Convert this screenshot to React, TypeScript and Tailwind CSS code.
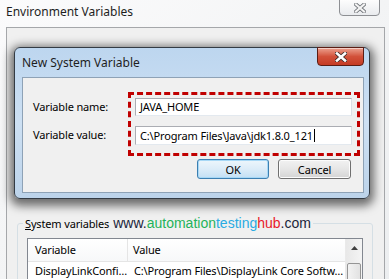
import React from 'react';

// Small window-chrome X used by both close buttons
const CloseGlyph: React.FC<{ outline: string; fill: string; w?: number }> = ({ outline, fill, w = 3 }) => (
  <svg width="12" height="10" viewBox="0 0 12 10">
    <path d="M2 1.5 L10 8.5 M10 1.5 L2 8.5" stroke={outline} strokeWidth={w + 1.6} strokeLinecap="square" />
    <path d="M2 1.5 L10 8.5 M10 1.5 L2 8.5" stroke={fill} strokeWidth={w} strokeLinecap="square" />
  </svg>
);

const Field: React.FC<{ value: string; caret?: boolean; h: string }> = ({ value, caret, h }) => (
  <div
    className={`w-[217px] ${h} bg-white border border-[#abadb3] border-b-[#e3e9ef] border-r-[#dbdfe6] flex items-center pl-[4px]`}
  >
    <span className="leading-[14px]">{value}</span>
    {caret && <span className="w-px h-[13px] bg-black ml-px" />}
  </div>
);

export default function App() {
  return (
    <div className="w-[389px] h-[279px] overflow-hidden bg-gradient-to-br from-[#fbfbfc] via-[#f3f4f5] to-[#eceef0] text-[11px] tracking-[-0.15px] text-black font-['Noto_Sans',sans-serif]">
      {/* Environment Variables title bar */}
      <div className="h-[27px] flex items-start justify-between">
        <span className="pl-[6px] pt-[4px] text-[12px] leading-[16px] tracking-normal text-[#1e1e1e]">Environment Variables</span>
        <div className="mr-[9px] -mt-px w-[41px] h-[17px] rounded-b-[4px] border border-[#8d8f93] bg-gradient-to-b from-[#fdfdfd] to-[#e9ebee] flex items-center justify-center">
          <CloseGlyph outline="#6f7378" fill="#f4f4f4" w={2.2} />
        </div>
      </div>

      {/* Environment Variables body */}
      <div className="ml-[6px] mr-[4px] h-[260px] border border-[#a5a7aa] bg-[#f0f0f0] pl-[7px] pt-[19px]">
        {/* New System Variable dialog */}
        <div className="w-[356px] h-[152px] rounded-[6px] border border-[#333b44] bg-gradient-to-b from-[#bdd6ef] via-[#cde0f3] to-[#bcd3ea] shadow-[0_3px_10px_4px_rgba(0,0,0,0.55)] flex flex-col">
          <div className="h-[29px] flex items-start justify-between">
            <span className="pl-[7px] self-center text-[12px] leading-[16px] tracking-normal text-[#1e1e1e]">New System Variable</span>
            <div className="mr-[5px] -mt-px w-[47px] h-[19px] rounded-b-[4px] border border-[#5b1d14] bg-gradient-to-b from-[#eba08f] via-[#d2513a] to-[#c53b24] flex items-center justify-center shadow-[inset_0_1px_0_rgba(255,255,255,0.5)]">
              <CloseGlyph outline="#3b2a28" fill="#ffffff" w={2.6} />
            </div>
          </div>

          <div className="ml-[7px] mr-[5px] h-[116px] border border-[#8ea2b6] bg-[#f0f0f0]">
            <div className="flex pt-[14px]">
              <div className="w-[105px] pl-[10px] pt-[6px] flex flex-col gap-[10px]">
                <div className="h-[18px] flex items-center">Variable name:</div>
                <div className="h-[19px] flex items-center">Variable value:</div>
              </div>
              <div className="w-[232px] h-[64px] border-[3px] border-dashed border-[#c00000] pt-[3px] pl-[4px] flex flex-col gap-[10px]">
                <Field value="JAVA_HOME" h="h-[18px]" />
                <Field value="C:\Program Files\Java\jdk1.8.0_121" caret h="h-[19px]" />
              </div>
            </div>
            <div className="flex justify-end gap-[9px] mt-[3px] pr-[12px]">
              <button className="w-[72px] h-[20px] rounded-[3px] border border-[#3c7fb1] bg-gradient-to-b from-[#edf6fc] via-[#dcecf8] to-[#c3e0f4] shadow-[inset_0_0_0_1px_#a7d8f6] flex items-center justify-center leading-none">
                OK
              </button>
              <button className="w-[73px] h-[20px] rounded-[3px] border border-[#707070] bg-gradient-to-b from-[#f2f2f2] via-[#e6e6e6] to-[#d4d4d4] shadow-[inset_0_0_0_1px_#fcfcfc] flex items-center justify-center leading-none">
                Cancel
              </button>
            </div>
          </div>
        </div>

        {/* System variables group */}
        <fieldset className="mt-[15px] ml-[3px] w-[356px] h-[80px] border border-[#d5dfe5] rounded-[3px]">
          <legend className="ml-[5px] px-[2px] h-[18px] flex items-baseline">
            <span className="leading-[18px]">
              <span className="underline">S</span>ystem variables
            </span>
            <span className="ml-[4px] text-[14px] leading-[18px] tracking-normal font-['Liberation_Sans',sans-serif]">
              <span className="text-[#1b1f3b]">www.</span>
              <span className="text-[#1fb35a]">automation</span>
              <span className="text-[#29abe2]">testing</span>
              <span className="text-[#e8202a]">hub</span>
              <span className="text-[#1b1f3b]">.com</span>
            </span>
          </legend>

          <div className="mt-[6px] ml-[9px] w-[336px] h-[60px] border border-[#828790] bg-white flex">
            <div className="flex-1 flex flex-col">
              <div className="h-[23px] flex border-b border-[#e5e5e5] bg-gradient-to-b from-white to-[#f7f8f9]">
                <div className="w-[100px] pl-[7px] flex items-center border-r border-[#e5e5e5]">Variable</div>
                <div className="pl-[5px] flex items-center">Value</div>
              </div>
              <div className="h-[19px] flex items-center">
                <div className="w-[100px] pl-[7px]">DisplayLinkConfi…</div>
                <div className="pl-[6px] whitespace-nowrap">C:\Program Files\DisplayLink Core Softw…</div>
              </div>
            </div>
            <div className="w-[17px] bg-gradient-to-r from-[#e8e8e8] to-[#f4f4f4] border-l border-[#eaeaea] flex flex-col">
              <div className="h-[17px] flex items-center justify-center">
                <svg width="7" height="4" viewBox="0 0 7 4">
                  <path d="M0 4 L3.5 0 L7 4 Z" fill="#404040" />
                </svg>
              </div>
              <div className="mt-[7px] mx-px h-[30px] rounded-[2px] border border-[#959595] bg-gradient-to-r from-[#f3f3f3] to-[#e2e2e2]" />
            </div>
          </div>
        </fieldset>
      </div>
    </div>
  );
}
